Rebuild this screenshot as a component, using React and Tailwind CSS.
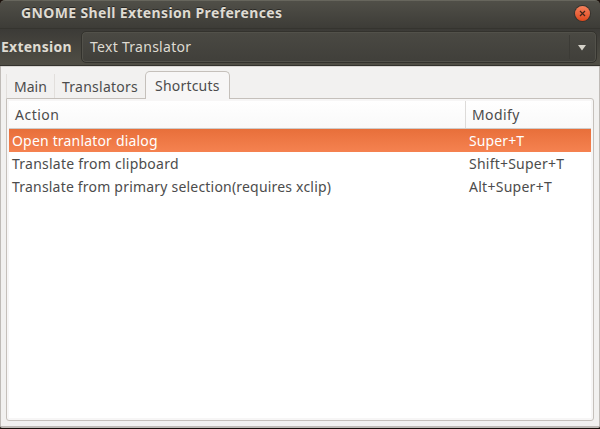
const rows = [
  { action: 'Open tranlator dialog', key: 'Super+T', actionTracking: 'tracking-[0.18px]', keyTracking: 'tracking-[0.1px]', selected: true },
  { action: 'Translate from clipboard', key: 'Shift+Super+T', actionTracking: 'tracking-[0.24px]', keyTracking: 'tracking-[0.23px]' },
  { action: 'Translate from primary selection(requires xclip)', key: 'Alt+Super+T', actionTracking: 'tracking-[0.2px]', keyTracking: 'tracking-[0.27px]' },
];

function TitleBar() {
  return (
    <header className="flex h-7 shrink-0 items-center justify-between rounded-t-[5px] border-t border-[#67665d] bg-linear-to-b from-[#504f48] to-[#3d3c37] pr-[10px] pl-[21px]">
      <h1 className="-mt-[3px] text-[14px] leading-5 font-bold tracking-[0.36px] whitespace-nowrap text-[#dfdbd2] [text-shadow:0_-1px_0_#292825]">GNOME Shell Extension Preferences</h1>
      <button aria-label="Close" className="-mt-[3px] flex size-[15px] items-center justify-center rounded-full bg-linear-to-b from-[#f5805b] to-[#de4719] shadow-[0_0_0_1px_#38332e]">
        <svg width="7" height="7" viewBox="0 0 7 7" fill="none" stroke="#40261b" strokeWidth="1.2">
          <path d="M1 1l5 5M6 1L1 6" />
        </svg>
      </button>
    </header>
  );
}

function ExtensionBar() {
  return (
    <div className="flex h-[38px] shrink-0 border-t border-b border-t-[#35342f] border-b-[#33322d] bg-linear-to-b from-[#3c3b37] to-[#504e45] pt-[2px] pr-[3px] pl-px">
      <label className="w-20 pt-[6px] text-[14px] leading-5 font-bold tracking-[0.25px] whitespace-nowrap text-[#dfdbd2]">Extension</label>
      <button className="flex h-8 flex-1 items-center justify-between rounded-[5px] border border-[#33322d] bg-linear-to-b from-[#4a4943] to-[#403f3a] pr-[10px] pl-2 shadow-[inset_0_0_0_1px_#52514a]">
        <span className="text-[14px] leading-5 tracking-[0.28px] whitespace-nowrap text-[#dfdbd2]">Text Translator</span>
        <span className="flex h-6 w-[17px] items-center justify-end border-l border-[#3c3b36]">
          <svg className="mt-px" width="8" height="6" viewBox="0 0 8 6"><path d="M0 0h8L4 5.5z" fill="#d5d2c9" /></svg>
        </span>
      </button>
    </div>
  );
}

function Tabs() {
  return (
    <nav className="flex h-[27px] items-end text-[14px] leading-5 whitespace-nowrap text-[#4c4c4c]">
      <button className="flex h-6 w-[49px] justify-start border-r border-l border-[#e2dfdc] pt-[3px] pl-[7px]">Main</button>
      <button className="flex h-6 w-[90px] justify-start pt-[3px] pl-[7px] tracking-[0.25px]">Translators</button>
      <button className="z-10 -mb-px flex h-[28px] w-[85px] justify-start rounded-t-[5px] border border-b-0 border-[#c5c0bb] bg-[#f7f6f6] pt-[4px] pl-[9px] tracking-[0.2px]">Shortcuts</button>
    </nav>
  );
}

export default function App() {
  return (
    <div className="flex h-[429px] w-[600px] flex-col overflow-hidden bg-[#1a100b] font-['Noto_Sans','Open_Sans',sans-serif]">
      <TitleBar />
      <ExtensionBar />
      <main className="flex h-[362px] flex-col rounded-t-[1px] rounded-b-[2px] border border-b-2 border-[#bfbbb7] border-t-[#d9d6d3] bg-[#f2f1f0] px-[5px] pt-[4px] pb-[5px]">
        <Tabs />
        <section className="flex min-h-0 flex-1 flex-col rounded-[3px] rounded-tl-none border border-[#c5c0bb] bg-[#f7f6f6] p-[2px] text-[14px] text-[#4c4c4c]">
          <div className="flex h-7 shrink-0 border-b border-[#cfccca] bg-linear-to-b from-white to-[#f9f9f9] leading-[27px]">
            <div className="w-[457px] border-r border-[#dddbd9] pl-[6px] tracking-[0.5px]">Action</div>
            <div className="pl-[6px] tracking-[0.4px]">Modify</div>
          </div>
          <div className="flex-1 bg-white">
            {rows.map((r) => (
              <div key={r.action} className={'flex h-[23px] leading-[23px] whitespace-nowrap ' + (r.selected ? 'bg-linear-to-b from-[#e86f3a] to-[#f58250] text-white' : '')}>
                <span className={'w-[457px] pl-[3px] ' + r.actionTracking}>{r.action}</span>
                <span className={'pl-[3px] ' + r.keyTracking}>{r.key}</span>
              </div>
            ))}
          </div>
        </section>
      </main>
    </div>
  );
}
